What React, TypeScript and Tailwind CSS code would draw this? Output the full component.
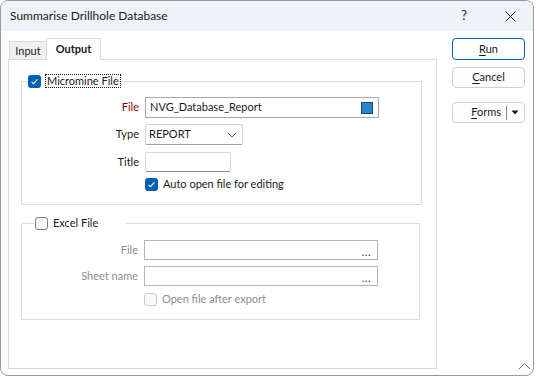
export default function App() {
  return (
    <div className="w-[536px] h-[378px] bg-white font-['Lato','Noto_Sans',sans-serif] text-[11px] text-[#1a1a1a]">
      <div className="relative w-[534px] h-[376px] border border-[#9a9a9a] rounded-[8px] overflow-hidden flex flex-col bg-white">
        <TitleBar />
        <div className="flex pt-[7px] pl-[7px]">
          <div className="flex flex-col">
            <Tabs />
            <div className="w-[429px] h-[310px] border border-[#d9d9d9] bg-white">
              <MicromineGroup />
              <ExcelGroup />
            </div>
          </div>
          <Buttons />
        </div>
        <svg
          className="absolute right-[2px] bottom-[5px]"
          width="13"
          height="8"
          viewBox="0 0 13 8"
          aria-hidden="true"
        >
          <path d="M1 7 L6.5 1.5 L12 7" fill="none" stroke="#6b6b6b" strokeWidth="1" />
        </svg>
      </div>
    </div>
  );
}

function TitleBar() {
  return (
    <div className="h-[30px] bg-[#eef2f9] flex items-center pl-[9px] shrink-0">
      <span className="text-[12px]">Summarise Drillhole Database</span>
      <span className="ml-auto text-[13px] mr-[38px]">?</span>
      <svg className="mr-[17px]" width="11" height="11" viewBox="0 0 11 11" aria-hidden="true">
        <path d="M0.5 0.5 L10.5 10.5 M10.5 0.5 L0.5 10.5" stroke="#1a1a1a" strokeWidth="1" />
      </svg>
    </div>
  );
}

function Tabs() {
  return (
    <div className="flex items-end h-[21px] pl-[1px]">
      <div className="w-[37px] h-[19px] border border-b-0 border-r-0 border-[#d9d9d9] bg-[#f0f0f0] flex items-center justify-center -mb-[1px]">
        Input
      </div>
      <div className="relative z-10 w-[55px] h-[22px] border border-b-0 border-[#d9d9d9] bg-white flex items-center justify-center font-bold -mb-[1px]">
        Output
      </div>
    </div>
  );
}

function Check({ checked, disabled }: { checked?: boolean; disabled?: boolean }) {
  if (checked) {
    return (
      <span className="w-[13px] h-[13px] rounded-[3px] bg-[#005fb8] flex items-center justify-center shrink-0">
        <svg width="9" height="9" viewBox="0 0 9 9" aria-hidden="true">
          <path d="M1.6 4.8 L3.6 6.7 L7.4 2.4" fill="none" stroke="white" strokeWidth="1.1" />
        </svg>
      </span>
    );
  }
  if (disabled) {
    return <span className="w-[13px] h-[13px] rounded-[3px] border border-[#cacaca] bg-[#f8f8f8] shrink-0" />;
  }
  return <span className="w-[13px] h-[13px] rounded-[3px] border border-[#7f7f7f] bg-[#f7f7f7] shrink-0" />;
}

function MicromineGroup() {
  return (
    <fieldset className="ml-[12px] mt-[14px] w-[401px] border border-[#dcdcdc] pb-[13px]">
      <legend className="ml-[5px] pl-[1px] pr-0">
        <span className="flex items-center h-[14px]">
          <Check checked />
          <span className="ml-[4px] px-[1px] h-[14px] leading-[12px] border border-dotted border-[#1a1a1a]">
            Micromine File
          </span>
        </span>
      </legend>

      <div className="flex items-center mt-[9px] h-[21px]">
        <span className="w-[117px] text-right text-[#8b0000]">File</span>
        <div className="ml-[6px] w-[234px] h-[21px] border border-[#a8a8a8] flex items-center pl-[4px] pr-[5px]">
          <span>NVG_Database_Report</span>
          <span className="ml-auto w-[12px] h-[12px] bg-[#1f87d4] border border-[#2b4256]" />
        </div>
      </div>

      <div className="flex items-center mt-[6px] h-[21px]">
        <span className="w-[117px] text-right">Type</span>
        <div className="ml-[6px] w-[98px] h-[21px] border border-[#d2d2d2] border-b-[#a0a0a0] rounded-[2px] flex items-center pl-[3px] pr-[5px]">
          <span>REPORT</span>
          <svg className="ml-auto" width="10" height="6" viewBox="0 0 10 6" aria-hidden="true">
            <path d="M1 1 L5 5 L9 1" fill="none" stroke="#5c5c5c" strokeWidth="1" />
          </svg>
        </div>
      </div>

      <div className="flex items-center mt-[7px] h-[20px]">
        <span className="w-[117px] text-right">Title</span>
        <div className="ml-[6px] w-[86px] h-[20px] border border-[#d6d6d6] border-b-[#8a8a8a] rounded-[2px]" />
      </div>

      <div className="flex items-center mt-[5px] h-[14px] pl-[123px]">
        <Check checked />
        <span className="ml-[5px]">Auto open file for editing</span>
      </div>
    </fieldset>
  );
}

function ExcelGroup() {
  return (
    <fieldset className="ml-[12px] mt-[11px] w-[399px] border border-[#dcdcdc] pb-[13px]">
      <legend className="ml-[12px] pl-[1px] w-[92px]">
        <span className="flex items-center h-[14px]">
          <Check />
          <span className="ml-[5px]">Excel File</span>
        </span>
      </legend>

      <div className="flex items-center mt-[10px] h-[20px]">
        <span className="w-[116px] text-right text-[#8d8d8d]">File</span>
        <BrowseBox />
      </div>

      <div className="flex items-center mt-[6px] h-[20px]">
        <span className="w-[116px] text-right text-[#8d8d8d]">Sheet name</span>
        <BrowseBox />
      </div>

      <div className="flex items-center mt-[7px] h-[13px] pl-[122px]">
        <Check disabled />
        <span className="ml-[5px] text-[#8d8d8d]">Open file after export</span>
      </div>
    </fieldset>
  );
}

function BrowseBox() {
  return (
    <div className="ml-[6px] w-[234px] h-[20px] border border-[#b4b4b4] flex items-end justify-end pr-[6px] pb-[2px]">
      <span className="text-[11px] leading-[11px] tracking-[0.5px] text-[#333]">...</span>
    </div>
  );
}

function Buttons() {
  return (
    <div className="ml-[15px] w-[73px] flex flex-col">
      <button className="h-[22px] rounded-[4px] border border-[#005fb8] bg-white">
        <span className="underline underline-offset-2">R</span>un
      </button>
      <button className="mt-[7px] h-[21px] rounded-[4px] border border-[#d0d0d0] bg-[#fdfdfd]">
        <span className="underline underline-offset-2">C</span>ancel
      </button>
      <button className="mt-[14px] h-[21px] rounded-[4px] border border-[#d0d0d0] bg-[#fdfdfd] flex items-center">
        <span className="ml-auto">
          <span className="underline underline-offset-2">F</span>orms
        </span>
        <span className="ml-[5px] w-px h-[14px] bg-[#8a8a8a]" />
        <svg className="ml-[4px] mr-[5px]" width="8" height="5" viewBox="0 0 8 5" aria-hidden="true">
          <path d="M0.5 0.5 L7.5 0.5 L4 4.5 Z" fill="#1a1a1a" />
        </svg>
      </button>
    </div>
  );
}
